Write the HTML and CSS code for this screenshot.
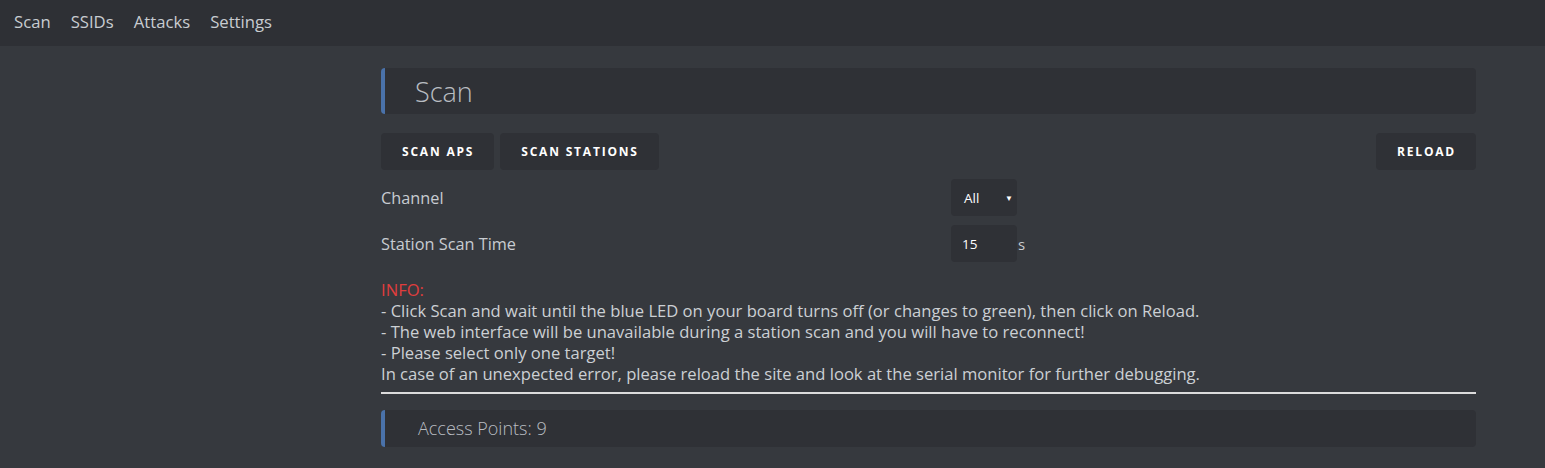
FILE: index.html
```html
<!DOCTYPE html>
<html>
<head>
<meta charset="utf-8">
<link rel="stylesheet" href="styles.css">
</head>
<body>
<nav class="nav">
  <a class="nav-link">Scan</a>
  <a class="nav-link">SSIDs</a>
  <a class="nav-link">Attacks</a>
  <a class="nav-link">Settings</a>
</nav>
<main class="page">
  <div class="content">
    <h1 class="header">Scan</h1>
    <div class="btn-row">
      <div class="btn-group">
        <button class="btn">SCAN APS</button>
        <button class="btn">SCAN STATIONS</button>
      </div>
      <button class="btn">RELOAD</button>
    </div>
    <div class="form-row">
      <label class="label">Channel</label>
      <div class="field">
        <div class="select">All <span class="caret">▼</span></div>
      </div>
    </div>
    <div class="form-row">
      <label class="label">Station Scan Time</label>
      <div class="field">
        <div class="input">15</div><span class="unit">s</span>
      </div>
    </div>
    <div class="info">
      <span class="info-title">INFO:</span><br>
      - Click Scan and wait until the blue LED on your board turns off (or changes to green), then click on Reload.<br>
      - The web interface will be unavailable during a station scan and you will have to reconnect!<br>
      - Please select only one target!<br>
      In case of an unexpected error, please reload the site and look at the serial monitor for further debugging.
    </div>
    <hr class="divider">
    <h2 class="header header-small">Access Points: 9</h2>
  </div>
</main>
</body>
</html>
```
FILE: styles.css
```css
* { box-sizing: border-box; }
html, body { margin: 0; padding: 0; }
body {
  background: #36393e;
  color: #c8ccd1;
  font-family: "Open Sans", "Noto Sans", sans-serif;
  font-size: 15px;
  height: 468px;
  overflow: hidden;
}
.nav {
  background: #2e3035;
  height: 46px;
  display: flex;
  align-items: center;
  padding-left: 14px;
  padding-bottom: 3px;
  gap: 20px;
}
.nav-link {
  color: #c8ccd1;
  font-size: 16.7px;
}
.page {
  display: grid;
  grid-template-columns: 381px 1095px;
  padding-top: 22px;
}
.content { grid-column: 2; }
.header {
  margin: 0;
  background: #2f3136;
  border-left: 4px solid #4a72aa;
  border-radius: 4px;
  height: 46px;
  display: flex;
  align-items: center;
  padding-left: 30px;
  font-weight: 300;
  font-size: 27px;
  color: #b9bdc2;
}
.btn-row {
  display: flex;
  justify-content: space-between;
  margin-top: 19px;
}
.btn-group { display: flex; gap: 6px; }
.btn {
  background: #2f3136;
  border: none;
  border-radius: 4px;
  color: #fff;
  font-family: "Open Sans", sans-serif;
  font-weight: 700;
  font-size: 12px;
  letter-spacing: 1.8px;
  height: 37px;
  padding: 0 20px 0 21px;
}
.form-row {
  display: grid;
  grid-template-columns: 570px auto;
  align-items: center;
  margin-top: 9px;
}
.label { font-size: 16.3px; }
.field { display: flex; align-items: center; }
.select, .input {
  width: 66px;
  height: 37px;
  background: #2f3136;
  border-radius: 4px;
  display: flex;
  align-items: center;
  padding-left: 13px;
  color: #fff;
  font-size: 13.5px;
}
.input { padding-left: 11px; }
.select { justify-content: space-between; padding-right: 4px; }
.caret { font-size: 8px; }
.unit { margin-left: 1px; font-size: 15px; }
.info {
  margin-top: 17px;
  line-height: 21px;
  font-size: 16.6px;
  color: #ccd0d4;
}
.info-title { color: #e03d3d; }
.divider {
  margin: 8px 0 0;
  border: none;
  height: 2px;
  background: #dcdcdc;
}
.header-small {
  margin-top: 16px;
  height: 37px;
  font-size: 18px;
  padding-left: 33px;
  padding-bottom: 2px;
}
```
